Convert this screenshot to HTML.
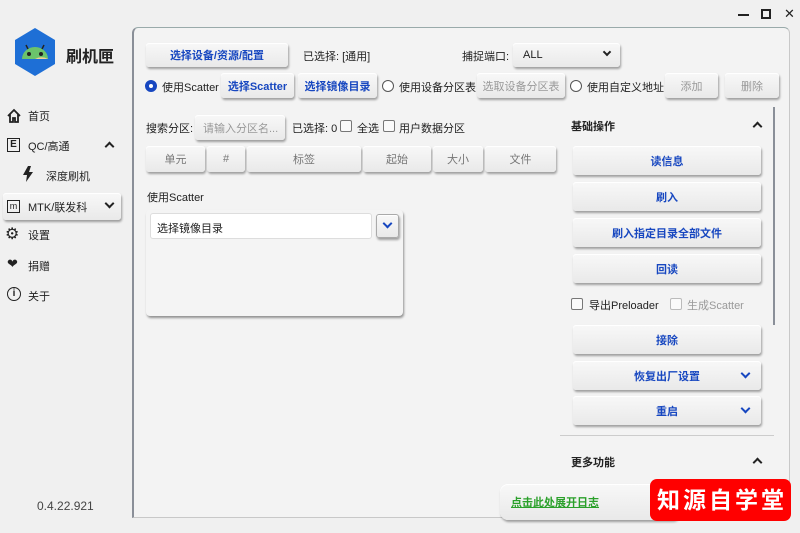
<!DOCTYPE html>
<html><head><meta charset="utf-8"><style>
*{margin:0;padding:0;box-sizing:border-box}
body{width:800px;height:533px;overflow:hidden;background:#f0f0f0;font-family:"Liberation Sans","Noto Sans CJK SC",sans-serif;font-size:11px;color:#222;position:relative}
.a{position:absolute;white-space:nowrap}
.btn{position:absolute;background:linear-gradient(#f8f8f8,#e9e9e9);border-radius:3px;box-shadow:1px 2px 2px rgba(0,0,0,.35),inset 0 1px 0 #fff;display:flex;align-items:center;justify-content:center;font-size:11px}
.blue{color:#1747c0;font-weight:bold}
.grey{color:#999}
.hd{color:#777}
.rad{position:absolute;width:12px;height:12px;border:1px solid #555;border-radius:50%;background:#fff}
.chk{position:absolute;width:12px;height:12px;border:1px solid #777;border-radius:2px;background:#fafafa}
.chev{position:absolute;width:7px;height:7px;border-right:2px solid #1747c0;border-bottom:2px solid #1747c0;transform:rotate(45deg)}
.up{position:absolute;width:7px;height:7px;border-left:2px solid #222;border-top:2px solid #222;transform:rotate(45deg)}
</style></head><body>
<div class="a" style="left:738px;top:14px;width:11px;height:2px;background:#222"></div>
<div class="a" style="left:761px;top:9px;width:10px;height:10px;border:2px solid #222"></div>
<div class="a" style="left:784px;top:6px;font-size:13px">✕</div>
<svg class="a" style="left:13px;top:27px" width="44" height="50" viewBox="0 0 44 50"><polygon points="22,1 42,13 42,37 22,49 2,37 2,13" fill="#1e6fd6"/><path d="M9,32 a13,12 0 0 1 26,0z" fill="#6bc36b"/><path d="M22,32 a13,12 0 0 1 13,0z" fill="#f0d090"/><circle cx="16" cy="27" r="2" fill="#222"/><circle cx="28" cy="27" r="2" fill="#222"/><line x1="13" y1="18" x2="15" y2="22" stroke="#222" stroke-width="1.5"/><line x1="31" y1="18" x2="29" y2="22" stroke="#222" stroke-width="1.5"/></svg>
<div class="a" style="left:66px;top:43px;font-size:16px;font-weight:bold">刷机匣</div>
<svg class="a" style="left:6px;top:108px" width="16" height="16" viewBox="0 0 16 16"><path d="M2,8 L8,2 L14,8 M4,6 V14 H7 V10 H9 V14 H12 V6" fill="none" stroke="#222" stroke-width="1.8"/></svg>
<div class="a" style="left:28px;top:108px">首页</div>
<div class="a" style="left:7px;top:138px;width:13px;height:14px;border:1.5px solid #222;font-size:10px;font-weight:bold;text-align:center;line-height:11px">E</div><div class="a" style="left:28px;top:138px">QC/高通</div>
<div class="up" style="left:106px;top:143px"></div>
<svg class="a" style="left:22px;top:166px" width="12" height="16" viewBox="0 0 12 16"><path d="M6,0 L1,9 H5 L4,16 L11,6 H7 L9,0z" fill="#222"/></svg>
<div class="a" style="left:46px;top:168px">深度刷机</div>
<div class="btn" style="left:3px;top:193px;width:118px;height:27px"></div>
<div class="a" style="left:7px;top:200px;width:13px;height:13px;border:1.5px solid #222;font-size:9px;text-align:center;line-height:10px">m</div><div class="a" style="left:28px;top:199px">MTK/联发科</div>
<div class="a" style="left:106px;top:200px;width:7px;height:7px;border-right:2px solid #222;border-bottom:2px solid #222;transform:rotate(45deg)"></div>
<div class="a" style="left:5px;top:224px;font-size:16px">⚙</div><div class="a" style="left:28px;top:227px">设置</div>
<div class="a" style="left:7px;top:256px;font-size:13px">❤</div><div class="a" style="left:28px;top:258px">捐赠</div>
<div class="a" style="left:7px;top:287px;width:14px;height:14px;border:1.5px solid #222;border-radius:50%;font-size:10px;text-align:center;line-height:11px;font-weight:bold">i</div><div class="a" style="left:28px;top:288px">关于</div>
<div class="a" style="left:37px;top:499px;color:#444;font-size:12px">0.4.22.921</div>
<div class="a" style="left:132px;top:27px;width:658px;height:491px;border:1px solid #c8c8c8;border-left:2px solid #8a8f98;border-top:1px solid #9aa;border-radius:6px 6px 0 0;background:#f3f3f3"></div>
<div class="btn blue" style="left:146px;top:43px;width:142px;height:24px">选择设备/资源/配置</div>
<div class="a" style="left:303px;top:48px">已选择: [通用]</div>
<div class="a" style="left:462px;top:48px">捕捉端口:</div>
<div class="btn" style="left:513px;top:43px;width:107px;height:24px;justify-content:flex-start;padding-left:10px">ALL</div>
<div class="a" style="left:604px;top:49px;width:6px;height:6px;border-right:2px solid #222;border-bottom:2px solid #222;transform:rotate(45deg)"></div>
<div class="rad" style="left:145px;top:80px;border:4px solid #1747c0"></div>
<div class="a" style="left:162px;top:79px">使用Scatter</div>
<div class="btn blue" style="left:221px;top:73px;width:73px;height:25px">选择Scatter</div>
<div class="btn blue" style="left:298px;top:73px;width:79px;height:25px">选择镜像目录</div>
<div class="rad" style="left:382px;top:80px"></div>
<div class="a" style="left:399px;top:79px">使用设备分区表</div>
<div class="btn grey" style="left:477px;top:73px;width:88px;height:25px">选取设备分区表</div>
<div class="rad" style="left:570px;top:80px"></div>
<div class="a" style="left:587px;top:79px">使用自定义地址</div>
<div class="btn grey" style="left:665px;top:73px;width:53px;height:25px">添加</div>
<div class="btn grey" style="left:725px;top:73px;width:54px;height:25px">删除</div>
<div class="a" style="left:146px;top:120px">搜索分区:</div>
<div class="btn grey" style="left:195px;top:115px;width:90px;height:25px;justify-content:flex-start;padding-left:8px">请输入分区名...</div>
<div class="a" style="left:292px;top:120px">已选择: 0</div>
<div class="chk" style="left:340px;top:120px"></div><div class="a" style="left:357px;top:120px">全选</div>
<div class="chk" style="left:383px;top:120px"></div><div class="a" style="left:399px;top:120px">用户数据分区</div>
<div class="btn hd" style="left:146px;top:146px;width:59px;height:26px">单元</div>
<div class="btn hd" style="left:207px;top:146px;width:38px;height:26px">#</div>
<div class="btn hd" style="left:247px;top:146px;width:114px;height:26px">标签</div>
<div class="btn hd" style="left:363px;top:146px;width:68px;height:26px">起始</div>
<div class="btn hd" style="left:433px;top:146px;width:50px;height:26px">大小</div>
<div class="btn hd" style="left:485px;top:146px;width:71px;height:26px">文件</div>
<div class="a" style="left:147px;top:189px">使用Scatter</div>
<div class="a" style="left:146px;top:210px;width:257px;height:106px;background:#f4f4f4;border-radius:4px;box-shadow:1px 2px 2px rgba(0,0,0,.4)"></div>
<div class="a" style="left:150px;top:213px;width:222px;height:26px;background:#fff;border:1px solid #ddd;border-radius:3px;padding:6px 6px">选择镜像目录</div>
<div class="btn" style="left:376px;top:214px;width:23px;height:24px;border:1px solid #aaa"></div>
<div class="chev" style="left:384px;top:220px"></div>
<div class="a" style="left:571px;top:118px;font-weight:bold">基础操作</div>
<div class="up" style="left:754px;top:123px"></div>
<div class="a" style="left:773px;top:107px;width:2px;height:218px;background:#8a8f98"></div>
<div class="btn blue" style="left:573px;top:146px;width:188px;height:29px">读信息</div>
<div class="btn blue" style="left:573px;top:182px;width:188px;height:29px">刷入</div>
<div class="btn blue" style="left:573px;top:218px;width:188px;height:29px">刷入指定目录全部文件</div>
<div class="btn blue" style="left:573px;top:254px;width:188px;height:29px">回读</div>
<div class="chk" style="left:571px;top:298px"></div><div class="a" style="left:589px;top:297px">导出Preloader</div>
<div class="chk" style="left:670px;top:298px;border-color:#bbb"></div><div class="a grey" style="left:687px;top:297px">生成Scatter</div>
<div class="btn blue" style="left:573px;top:325px;width:188px;height:29px">接除</div>
<div class="btn blue" style="left:573px;top:361px;width:188px;height:29px">恢复出厂设置</div>
<div class="chev" style="left:742px;top:370px"></div>
<div class="btn blue" style="left:573px;top:396px;width:188px;height:29px">重启</div>
<div class="chev" style="left:742px;top:405px"></div>
<div class="a" style="left:560px;top:435px;width:214px;height:1px;background:#ccc"></div>
<div class="a" style="left:571px;top:454px;font-weight:bold">更多功能</div>
<div class="up" style="left:754px;top:459px"></div>
<div class="btn" style="left:500px;top:484px;width:180px;height:36px;justify-content:flex-start;padding-left:11px;border-radius:8px"><span style="color:#2aa02a;font-weight:bold;text-decoration:underline">点击此处展开日志</span></div>
<div class="a" style="left:650px;top:479px;width:141px;height:42px;background:#f00;border-radius:7px;color:#fff;font-size:23px;font-weight:bold;letter-spacing:3px;text-align:center;line-height:42px;padding-left:3px">知源自学堂</div>
</body></html>
